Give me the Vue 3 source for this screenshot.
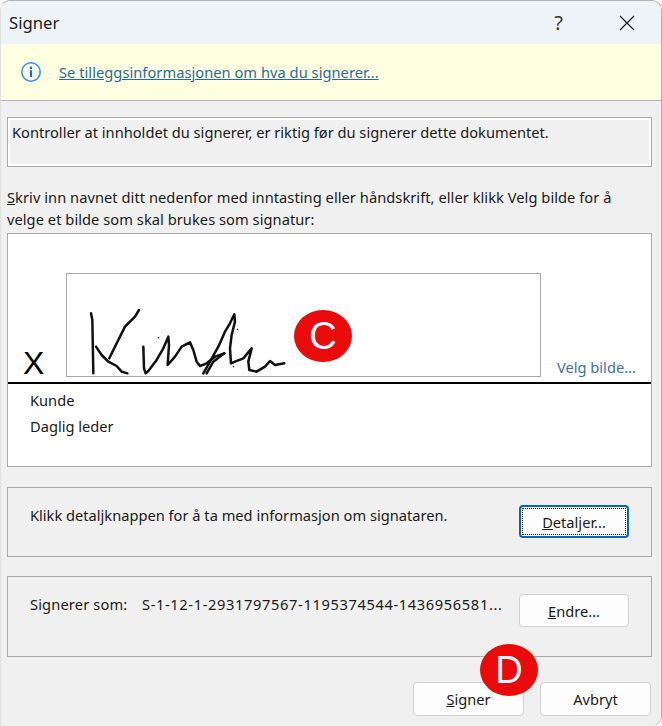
<script setup>
const inkStrokes = [
  '18,25 22,45 25,205',
  '162,15 150,35 120,65 100,105 85,135 73,160',
  '33,125 50,150 70,170 95,183 110,200 127,205',
  '175,125 177,190 182,205 190,198 215,165 235,130 250,95 252,120 248,180 270,155 290,125 315,112 325,135 335,170 345,183 365,175 390,155 418,145',
  '355,205 375,170 400,125 420,80 435,55 448,28 450,50 440,90 435,130 438,175 450,170 475,160 500,130 490,170 493,195 515,200 540,185 555,168 570,180 598,175',
  '365,205 385,170 418,145'
]
</script>

<template>
  <div class="window">
    <header class="titlebar">
      <span class="title">Signer</span>
      <span class="help">?</span>
      <svg class="close" viewBox="0 0 16 16" width="16" height="16" aria-hidden="true">
        <path d="M1 1 L15 15 M15 1 L1 15" stroke="#1a1a1a" stroke-width="1.2" fill="none" />
      </svg>
    </header>

    <div class="notice">
      <svg class="info" viewBox="0 0 22 22" width="22" height="22" aria-hidden="true">
        <circle cx="11" cy="11" r="9.2" fill="#fff" stroke="#3a96dd" stroke-width="1.6" />
        <circle cx="11" cy="6.9" r="1.3" fill="#1f6fb0" />
        <rect x="9.9" y="9.2" width="2.2" height="6.8" fill="#1f6fb0" />
      </svg>
      <a class="link">Se tilleggsinformasjonen om hva du signerer...</a>
    </div>

    <main class="content">
      <div class="instruction">Kontroller at innholdet du signerer, er riktig før du signerer dette dokumentet.</div>

      <p class="prompt">
        <u>S</u>kriv inn navnet ditt nedenfor med inntasting eller håndskrift, eller klikk Velg bilde for å<br />
        velge et bilde som skal brukes som signatur:
      </p>

      <section class="signbox">
        <div class="signrow">
          <span class="x">X</span>
          <div class="ink">
            <svg viewBox="67 274 473 102" width="473" height="102" aria-hidden="true">
              <g transform="translate(85 305) scale(0.3333)" fill="none" stroke="#111" stroke-width="7.5" stroke-linejoin="round" stroke-linecap="round">
                <polyline v-for="(pts, i) in inkStrokes" :key="i" :points="pts" />
                <circle cx="220" cy="98" r="1" stroke-width="3" />
                <circle cx="457" cy="73" r="1" stroke-width="3" />
                <circle cx="445" cy="185" r="1" stroke-width="3" />
              </g>
            </svg>
          </div>
          <a class="pick">Velg bilde...</a>
        </div>
        <div class="signer">
          <div>Kunde</div>
          <div>Daglig leder</div>
        </div>
      </section>

      <section class="frame frame-details">
        <span class="frame-text">Klikk detaljknappen for å ta med informasjon om signataren.</span>
        <button class="btn focused"><span class="focus-ring"><u>D</u>etaljer...</span></button>
      </section>

      <section class="frame frame-signas">
        <span class="frame-text signas">
          <span class="signas-label">Signerer som:</span>
          <span class="signas-value">S-1-12-1-2931797567-1195374544-1436956581...</span>
        </span>
        <button class="btn"><u>E</u>ndre...</button>
      </section>

      <footer class="actions">
        <button class="btn"><u>S</u>igner</button>
        <button class="btn">Avbryt</button>
      </footer>
    </main>

    <span class="badge badge-c">C</span>
    <span class="badge badge-d">D</span>
  </div>
</template>

<style>
html, body { margin: 0; background: #fff; }
</style>

<style scoped>
.window {
  position: relative;
  box-sizing: border-box;
  width: 662px;
  height: 726px;
  overflow: hidden;
  display: flex;
  flex-direction: column;
  background: #f0f0f0;
  border: 1px solid #b4b4b4;
  border-left-color: #e0e0e0;
  border-bottom: none;
  border-radius: 10px 10px 10px 0;
  font-family: "Noto Sans", "Open Sans", sans-serif;
  font-size: 14.65px;
  color: #1a1a1a;
}
.titlebar {
  flex: none;
  box-sizing: border-box;
  height: 43px;
  display: flex;
  align-items: center;
  background: #eef3f8;
  padding: 0 26px 0 8px;
}
.title { font-size: 16.7px; flex: 1; }
.help { font-size: 20px; margin-right: 56px; color: #333; }
.close { display: block; }
.notice {
  flex: none;
  height: 56px;
  display: flex;
  align-items: center;
  gap: 17px;
  padding-left: 19px;
  background: #ffffe1;
  border-bottom: 1px solid #b4b4b4;
}
.link { color: #2a6c9e; text-decoration: underline; letter-spacing: 0.04px; }
.content {
  flex: 1;
  display: flex;
  flex-direction: column;
  padding: 16px 9px 0 6px;
}
.instruction {
  box-sizing: border-box;
  height: 50px;
  border: 1px solid #a9a9a9;
  outline: 2px solid #fff;
  outline-offset: -3px;
  padding: 3px 4px;
  white-space: nowrap;
  line-height: 22px;
}
.prompt {
  margin: 19px 0 3px;
  line-height: 22px;
  white-space: nowrap;
  letter-spacing: 0.05px;
}
.signbox {
  box-sizing: border-box;
  height: 234px;
  background: #fff;
  border: 1px solid #a9a9a9;
}
.signrow {
  box-sizing: border-box;
  height: 150px;
  padding-top: 39px;
  display: flex;
  align-items: flex-start;
  border-bottom: 2px solid #000;
}
.x {
  width: 58px;
  padding-left: 15px;
  box-sizing: border-box;
  margin-top: 72px;
  font-family: "Liberation Sans", sans-serif;
  font-size: 32px;
  line-height: 36px;
  color: #000;
}
.ink {
  box-sizing: border-box;
  width: 475px;
  height: 104px;
  border: 1px solid #a9a9a9;
}
.ink svg { display: block; }
.pick {
  margin: 84px 0 0 16px;
  color: #3f73a8;
  line-height: 20px;
  white-space: nowrap;
}
.signer {
  padding: 3px 0 0 22px;
  line-height: 26px;
}
.frame {
  box-sizing: border-box;
  display: flex;
  justify-content: space-between;
  align-items: flex-start;
  border: 1px solid #a9a9a9;
  padding: 17px 22px 0;
}
.frame-details { height: 70px; margin-top: 20px; }
.frame-signas { height: 81px; margin-top: 19px; }
.frame-text { line-height: 22px; white-space: nowrap; margin-top: -1px; }
.signas { display: flex; }
.signas-label { width: 112px; letter-spacing: 0.15px; }
.signas-value { letter-spacing: 0.63px; }
.btn {
  box-sizing: border-box;
  width: 110px;
  height: 33px;
  padding: 0;
  background: #fdfdfd;
  border: 1px solid #d0d0d0;
  border-radius: 4px;
  font: inherit;
  color: inherit;
}
.focused {
  border: 2px solid #0067c0;
  padding: 1px;
}
.focus-ring {
  box-sizing: border-box;
  display: flex;
  align-items: center;
  justify-content: center;
  height: 100%;
  border: 1px dotted #111;
}
.actions {
  display: flex;
  justify-content: flex-end;
  gap: 16px;
  padding: 25px 1px 0 0;
}
.actions .btn { width: 111px; height: 34px; }
.badge {
  position: absolute;
  display: flex;
  align-items: center;
  justify-content: center;
  width: 58px;
  height: 52px;
  border-radius: 50%;
  background: #ea0a0a;
  color: #fff;
  font-family: "Liberation Sans", sans-serif;
  font-size: 38px;
}
.badge-c { left: 293px; top: 309px; }
.badge-d { left: 479px; top: 643px; }
</style>
